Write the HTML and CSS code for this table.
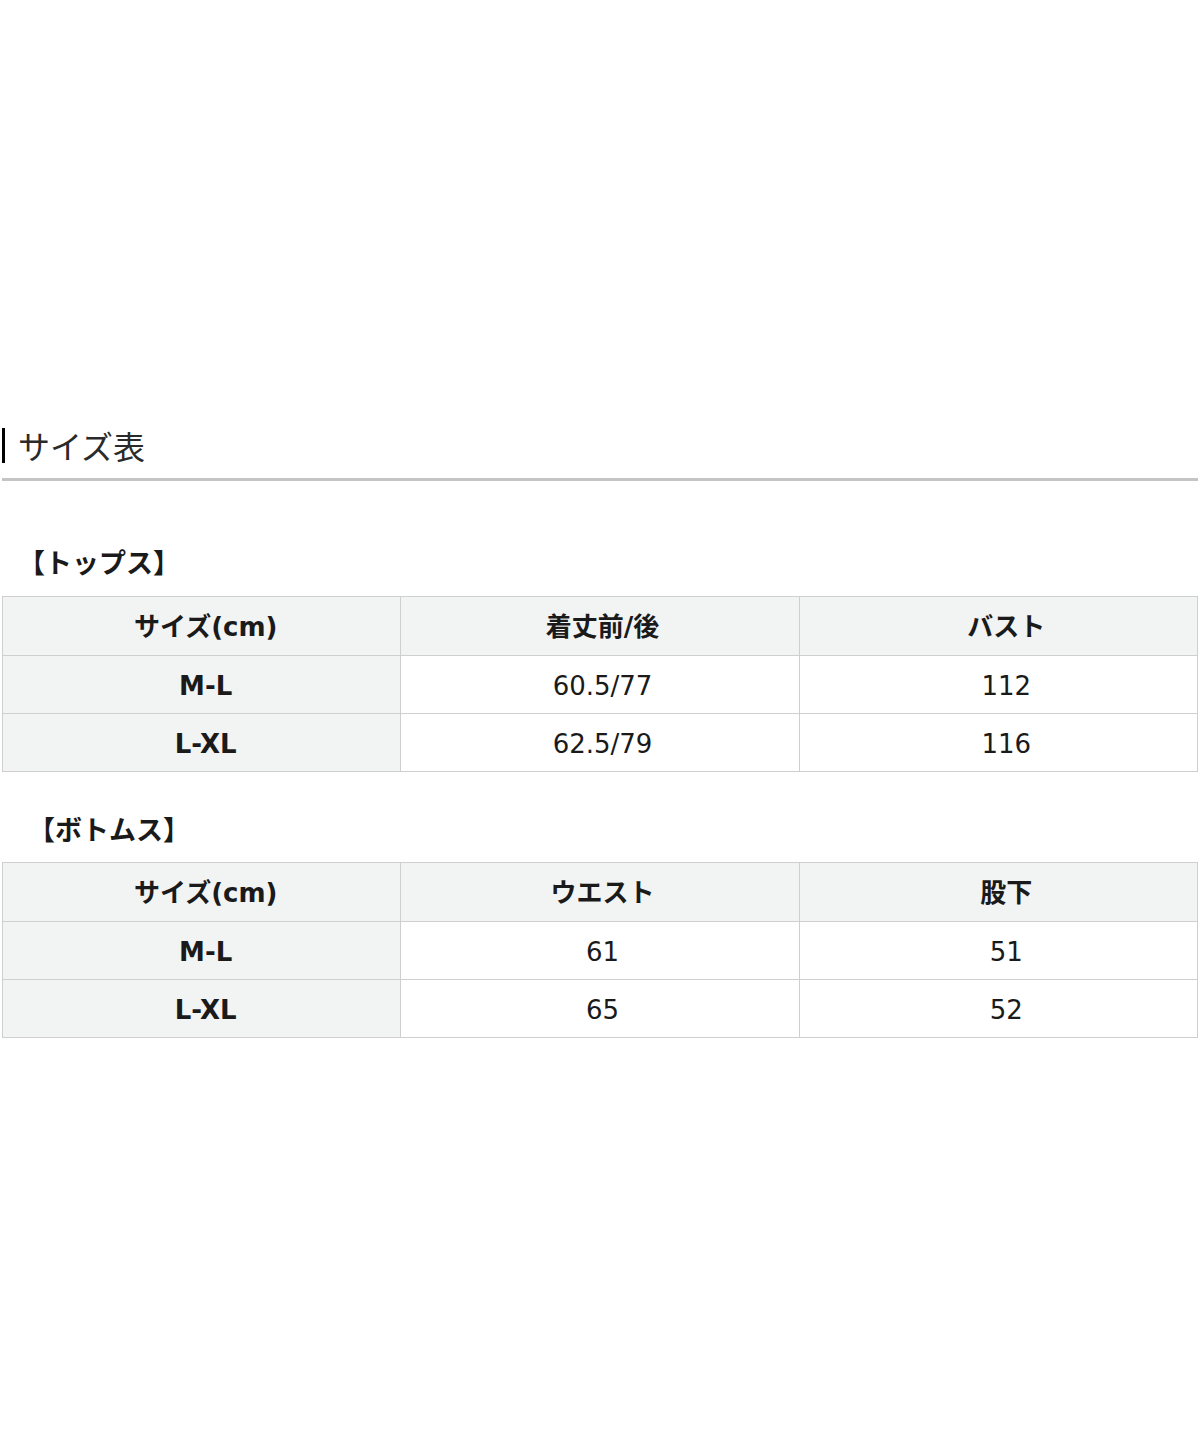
FILE: index.html
```html
<!DOCTYPE html>
<html lang="ja">
<head>
<meta charset="utf-8">
<title>サイズ表</title>
<link rel="stylesheet" href="styles.css">
</head>
<body>
<div class="page">
  <div class="heading">
    <span class="bar"></span>
    <h2 class="heading-text">サイズ表</h2>
  </div>

  <p class="section-label tops">【トップス】</p>
  <table class="size-table">
    <tr class="head-row"><th>サイズ(cm)</th><th>着丈前/後</th><th>バスト</th></tr>
    <tr><th>M-L</th><td>60.5/77</td><td>112</td></tr>
    <tr><th>L-XL</th><td>62.5/79</td><td>116</td></tr>
  </table>

  <p class="section-label bottoms">【ボトムス】</p>
  <table class="size-table">
    <tr class="head-row"><th>サイズ(cm)</th><th>ウエスト</th><th>股下</th></tr>
    <tr><th>M-L</th><td>61</td><td>51</td></tr>
    <tr><th>L-XL</th><td>65</td><td>52</td></tr>
  </table>
</div>
</body>
</html>
```

FILE: styles.css
```css
html, body {
  margin: 0;
  padding: 0;
  background: #ffffff;
}

body {
  font-family: "DejaVu Sans", "Noto Sans CJK JP", sans-serif;
  color: #1a1a1a;
}

.page {
  width: 1196px;
  padding: 425px 2px 0 2px;
}

.heading {
  display: flex;
  align-items: center;
  height: 40px;
  padding-bottom: 13px;
  border-bottom: 3px solid #c4c4c4;
}

.bar {
  width: 3px;
  height: 35px;
  background: #000000;
  margin-right: 13px;
}

.heading-text {
  margin: 0;
  font-family: "Noto Sans CJK JP", sans-serif;
  font-weight: 400;
  font-size: 32px;
  line-height: 40px;
  color: #2a2a2a;
}

.section-label {
  margin: 0;
  height: 30px;
  line-height: 30px;
  font-family: "Noto Sans CJK JP", sans-serif;
  font-weight: 700;
  font-size: 27px;
  color: #1a1a1a;
}

.section-label.tops {
  margin-top: 66px;
  margin-bottom: 19px;
  padding-left: 16px;
}

.section-label.bottoms {
  margin-top: 42px;
  margin-bottom: 18px;
  padding-left: 26px;
}

.size-table {
  width: 1196px;
  border-collapse: collapse;
  table-layout: fixed;
}

.size-table th,
.size-table td {
  height: 55px;
  padding: 2px 0 0 0;
  border: 1px solid #cfcfcf;
  text-align: center;
  vertical-align: middle;
  font-size: 26px;
  color: #1a1a1a;
}

.size-table .head-row th {
  height: 55px;
  padding-top: 0;
  padding-bottom: 3px;
}

.size-table tr > :nth-child(1) {
  padding-left: 8px;
}

.size-table tr > :nth-child(2) {
  padding-left: 5px;
}

.size-table tr > :nth-child(3) {
  padding-left: 16px;
}

.size-table th {
  background: #f2f3f3;
  font-weight: 700;
}

.size-table td {
  background: #ffffff;
  font-weight: 400;
}
```
